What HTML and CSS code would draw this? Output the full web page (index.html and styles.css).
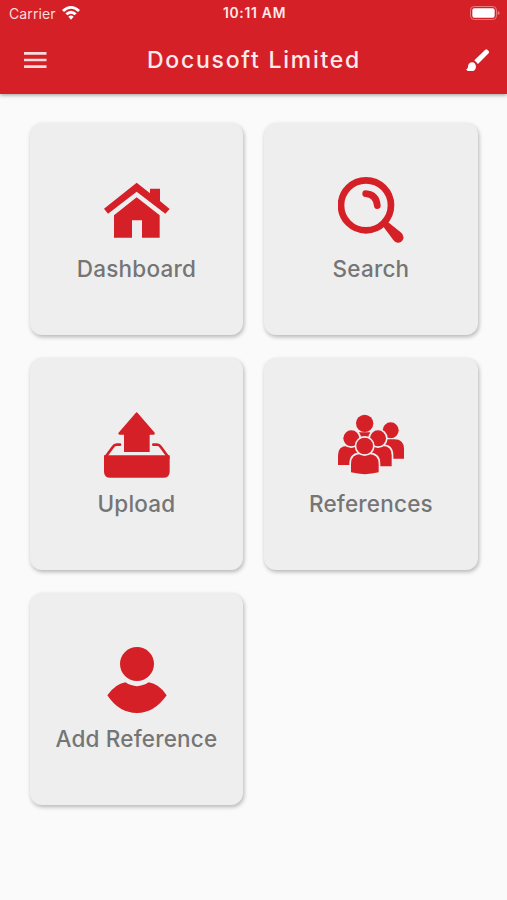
FILE: index.html
```html
<!DOCTYPE html>
<html lang="en">
<head>
<meta charset="utf-8">
<title>Docusoft Limited</title>
<link rel="stylesheet" href="styles.css">
</head>
<body>
<header class="header">
  <div class="status">
    <div class="carrier"><span>Carrier</span>
      <svg class="wifi" viewBox="0 0 54 42"><path d="M0 12Q27-12 54 12L48 18Q27-1 6 18ZM10 22Q27 7 44 22L38 28Q27 18 16 28ZM19 32Q27 25 35 32L27 41Z"/></svg>
    </div>
    <div class="time">10:11 AM</div>
    <svg class="battery" viewBox="0 0 90 42"><rect class="shell" x="1.5" y="1.5" width="78" height="39" rx="11"/><rect x="7" y="7" width="67" height="28" rx="6"/><path class="tip" d="M83 15Q89 17 89 21T83 27Z"/></svg>
  </div>
  <div class="appbar">
    <svg class="menu" viewBox="0 0 68 48"><path d="M0 0H68V8H0ZM0 20H68V28H0ZM0 40H68V48H0Z"/></svg>
    <h1 class="title">Docusoft Limited</h1>
    <svg class="brush" viewBox="635 145 70 68"><path d="M654 185C646 185 641 191 641 198C641 203 638 205 635 206C638 211 644 213 650 213C658 213 665 206 665 198C665 191 660 185 654 185ZM703 151L699 147Q696 144 693 147L660 179L671 190L703 158Q706 155 703 151Z"/></svg>
  </div>
</header>
<main class="grid">
  <a class="card">
    <svg class="icon" viewBox="42 20 198 198"><path d="M140 37L180 69V55H210V92L239 116L226 130L140 64L54 130L42 115ZM140 81L209 135V202H156V150H126V202H72V135Z"/></svg>
    <span class="label">Dashboard</span>
  </a>
  <a class="card">
    <svg class="icon" viewBox="41 20 198 198"><circle class="line" cx="125" cy="105" r="75"/><path class="line" d="M124 70Q156 72 159 106"/><path d="M175 166L188 153L229 186Q240 194 237 205Q232 218 219 217Q211 216 207 209Z"/></svg>
    <span class="label">Search</span>
  </a>
  <a class="card">
    <svg class="icon" viewBox="42 34 198 198"><path d="M137 37Q140 33 143 37L193 95Q197 102 190 102H179V154H102V102H89Q82 102 87 95ZM42 164H239V213Q239 231 220 231H61Q42 231 42 213Z"/><path class="rim" d="M90 132H80Q73 132 69 138L46 170M190 132H201Q208 132 212 138L235 170"/></svg>
    <span class="label">Upload</span>
  </a>
  <a class="card">
    <svg class="icon" viewBox="40 34 198 198">
      <circle cx="120" cy="68" r="26"/><path d="M103 95H137L132 108H108Z"/>
      <circle cx="198" cy="89" r="24"/><path d="M184 116H209Q238 116 238 145V174H202Q200 140 178 130Z"/>
      <g class="cut"><path d="M40 193V164Q40 136 68 136H92Q115 136 115 164V193Z"/><circle cx="80" cy="113" r="24"/></g>
      <g class="cut"><path d="M120 197V164Q120 136 148 136H173Q201 136 201 164V197Z"/><circle cx="160" cy="113" r="24"/></g>
      <g class="cut"><path d="M79 215V190Q79 160 109 160H131Q162 160 162 190V215Q120 226 79 215Z"/><circle cx="120" cy="136" r="25"/></g>
    </svg>
    <span class="label">References</span>
  </a>
  <a class="card">
    <svg class="icon" viewBox="41 33 198 198"><circle cx="140" cy="84" r="51"/><path d="M105 139Q140 162 175 139Q207 144 229 178Q192 231 140 231Q86 231 51 178Q75 144 105 139Z"/></svg>
    <span class="label">Add Reference</span>
  </a>
</main>
</body>
</html>
```
FILE: styles.css
```css
* { box-sizing: border-box; }
body { margin: 0; min-height: 900px; background: #fafafa; font-family: Inter, "Liberation Sans", sans-serif; }
svg { display: block; fill: currentColor; }
.header { height: 94px; background: #d52027; color: #fff; box-shadow: 0 1px 4px rgba(0, 0, 0, .4); }
.status { height: 27px; display: grid; grid-template-columns: 1fr auto 1fr; align-items: center; padding: 0 7px 0 9px; font-size: 14px; line-height: 27px; }
.carrier { display: flex; align-items: center; gap: 6px; color: #fbdcdd; letter-spacing: .1px; }
.wifi { width: 18px; height: 14px; color: #fff; margin-top: -2px; }
.time { font-weight: 600; font-size: 13.8px; letter-spacing: .75px; color: #fdeaea; }
.battery { width: 30px; height: 14px; justify-self: end; margin-top: -2px; }
.shell { fill: none; stroke: #e8797d; stroke-width: 3; }
.tip { fill: #e8797d; }
.appbar { height: 66px; padding: 0 18px 0 19px; display: grid; grid-template-columns: 1fr auto 1fr; align-items: center; }
.menu { width: 22.5px; height: 16px; margin-left: 5px; color: #fbdcdd; }
.title { margin: 0; font-size: 23px; line-height: 30px; font-weight: 500; letter-spacing: 1.75px; color: #fdeaea; }
.brush { width: 23.3px; height: 22.7px; justify-self: end; }
.grid { display: grid; grid-template-columns: 213.5px 213.5px; grid-auto-rows: 212.3px; gap: 22.7px 21px; padding: 29px 0 0 29.7px; }
.card { display: flex; flex-direction: column; align-items: center; padding-top: 54px; border-radius: 12px; background: #eee; box-shadow: 1px 2px 4px rgba(0, 0, 0, .28); }
.icon { width: 66px; height: 66px; margin-left: 1px; color: #d52027; }
.line { fill: none; stroke: currentColor; stroke-width: 20; stroke-linecap: round; }
.rim { fill: none; stroke: currentColor; stroke-width: 8; stroke-linecap: round; }
.cut > * { stroke: #eee; stroke-width: 10; paint-order: stroke; }
.label { margin-top: 12px; font-size: 22.5px; line-height: 28px; font-weight: 500; letter-spacing: .2px; color: #757575; white-space: nowrap; }
```
